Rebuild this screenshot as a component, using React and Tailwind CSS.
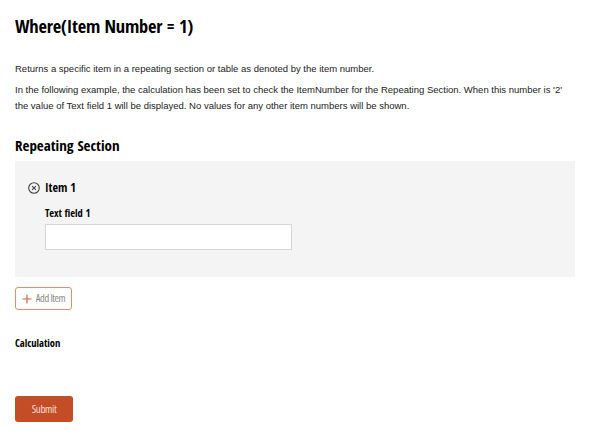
import React from 'react';

const CircleX = () => (
    <svg width="12" height="12" viewBox="0 0 12 12" fill="none" stroke="#444" strokeWidth="1.1">
        <circle cx="6" cy="6" r="5.3" />
        <path d="M4.1 4.1l3.8 3.8M7.9 4.1l-3.8 3.8" />
    </svg>
);

const Plus = () => (
    <svg width="10" height="10" viewBox="0 0 10 10" fill="none" stroke="#cf6446" strokeWidth="1.2">
        <path d="M5 0.5v9M0.5 5h9" />
    </svg>
);

const App = () => {
    return (
        <div className="w-[590px] h-[442px] bg-white px-[15px] font-['Liberation_Sans',Arial,sans-serif] text-[#222]">
            <h1 className="pt-[13px] font-['Open_Sans_Condensed','DejaVu_Sans_Condensed',sans-serif] text-[18.4px] font-bold leading-[26px] tracking-[-0.2px] text-black">
                Where(Item Number = 1)
            </h1>

            <p className="mt-[23px] text-[9.5px] leading-[14px]">
                Returns a specific item in a repeating section or table as denoted by the item number.
            </p>
            <p className="mt-[6px] text-[9.5px] leading-[16px]">
                In the following example, the calculation has been set to check the ItemNumber for the Repeating Section. When this number is '2' the value of Text field 1 will be displayed. No values for any other item numbers will be shown.
            </p>

            <h2 className="mt-[20px] font-['Open_Sans_Condensed','DejaVu_Sans_Condensed',sans-serif] text-[15px] font-bold leading-[22px] text-black">
                Repeating Section
            </h2>

            <div className="mt-[5px] h-[116px] bg-[#f4f4f4] pt-[18px] font-['Open_Sans_Condensed','DejaVu_Sans_Condensed',sans-serif]">
                <div className="flex items-center gap-[5px] pl-[13px]">
                    <CircleX />
                    <span className="text-[12px] font-bold leading-[18px] text-black">Item 1</span>
                </div>
                <div className="mt-[9px] pl-[30px]">
                    <div className="text-[10.5px] font-bold leading-[14px] text-black">Text field 1</div>
                    <div className="mt-[4px] h-[26px] w-[247px] border border-[#d6d6d6] bg-white" />
                </div>
            </div>

            <button className="mt-[10px] flex h-[23px] w-[57px] items-center justify-center gap-[4px] rounded-[3px] border border-solid [border-color:#e0906f] bg-white font-['Open_Sans',sans-serif] font-stretch-[75%] text-[10.5px] font-normal tracking-[-0.4px] text-[#8a8a8a]">
                <Plus />
                Add Item
            </button>

            <div className="mt-[26px] font-['Open_Sans_Condensed','DejaVu_Sans_Condensed',sans-serif] text-[10.5px] font-bold leading-[14px] text-black">
                Calculation
            </div>

            <button className="mt-[46px] h-[26px] w-[58px] rounded-[3px] bg-[#c24d26] font-['Open_Sans',sans-serif] font-stretch-[75%] text-[11px] font-normal tracking-[-0.4px] text-[#f6dcd2]">
                Submit
            </button>
        </div>
    );
};

export default App;
